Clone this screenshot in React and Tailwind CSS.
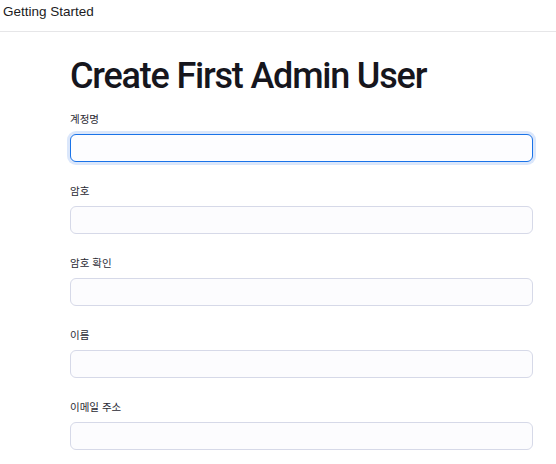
const fields = [
  { label: '계정명', type: 'text', focused: true },
  { label: '암호', type: 'password' },
  { label: '암호 확인', type: 'password' },
  { label: '이름', type: 'text' },
  { label: '이메일 주소', type: 'email' },
]

const font = { fontFamily: '"Liberation Sans", "Noto Sans CJK KR", sans-serif' }

export default function App() {
  return (
    <div className="min-h-screen bg-white text-[#1b1b22]" style={font}>
      <header className="h-[32px] border-b border-[#e6e6e8] px-[3px] pt-[4px]">
        <p className="text-[13.5px] leading-[16px] text-[#1b1b22]">Getting Started</p>
      </header>

      <main className="ml-[70px] w-[463px] pt-[24px]">
        <h1 className="font-['Roboto'] text-[36px] font-medium leading-[40px] tracking-[-1.2px] text-[#16161d]">
          Create First Admin User
        </h1>

        <form className="mt-[15px] flex flex-col gap-[21px]">
          {fields.map((field) => (
            <label key={field.label} className="flex flex-col gap-[7px]">
              <span className="text-[10.5px] leading-[16px] text-[#2a2a33]">{field.label}</span>
              <input
                type={field.type}
                className={
                  field.focused
                    ? 'h-[28px] rounded-[6px] border-[1.5px] border-[#1a73e8] bg-[#fdfdff] px-2 text-sm outline-none ring-[3px] ring-[#dbe7fb]'
                    : 'h-[28px] rounded-[6px] border border-[#d6d9e8] bg-[#fcfcfe] px-2 text-sm outline-none'
                }
              />
            </label>
          ))}
        </form>
      </main>
    </div>
  )
}
